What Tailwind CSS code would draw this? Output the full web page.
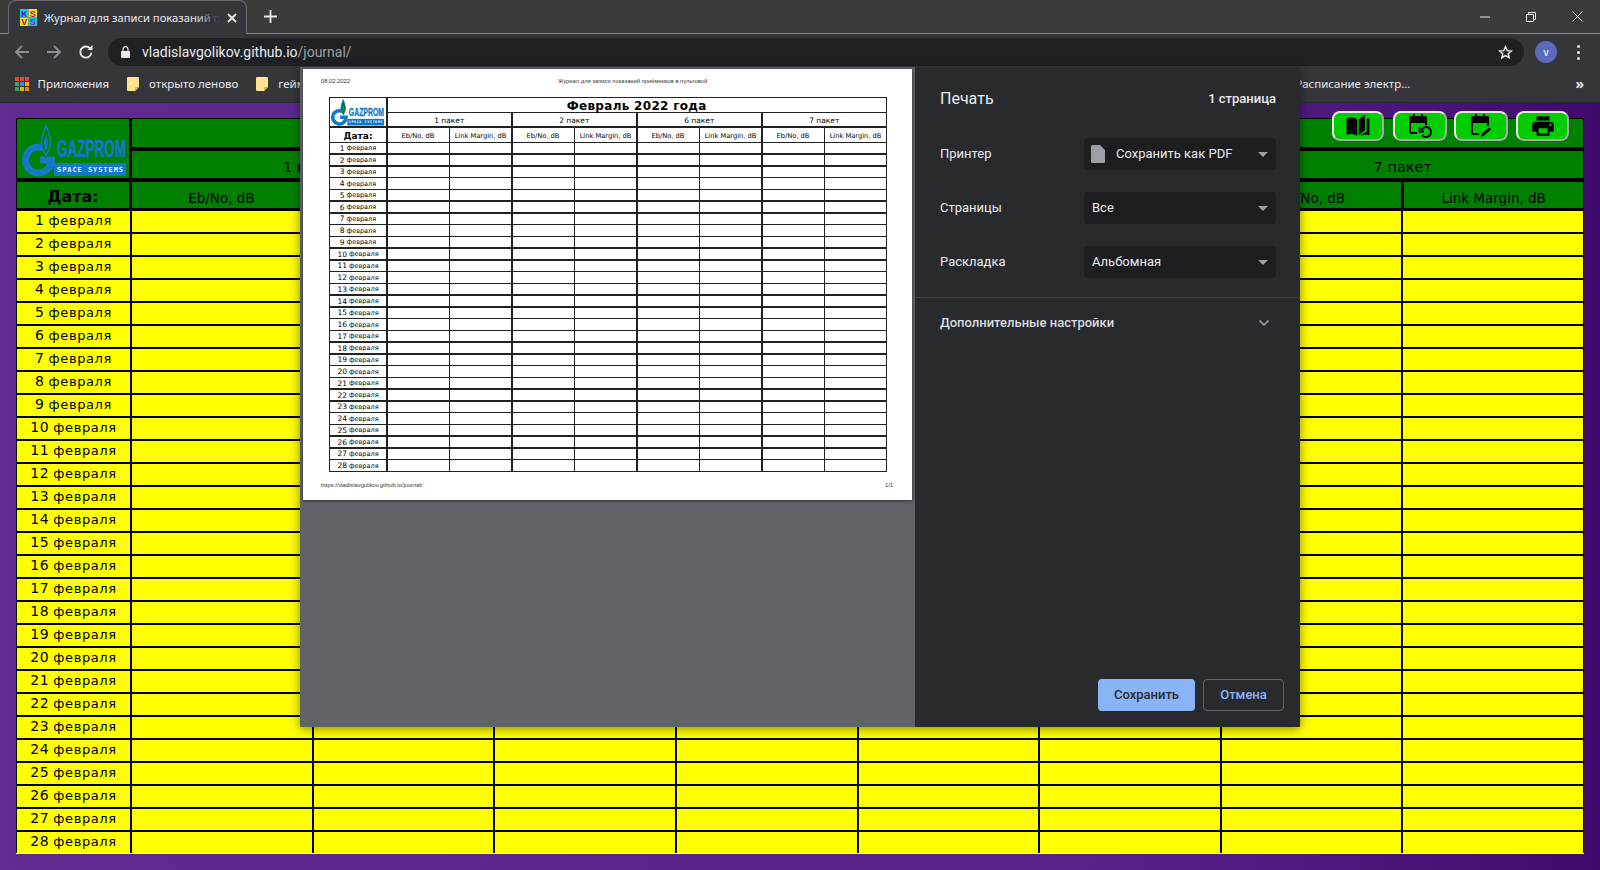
<!DOCTYPE html>
<html lang="ru">
<head>
  <meta charset="UTF-8">
  <title>Журнал для записи показаний приёмников в пультовой</title>
  <script src="https://cdn.jsdelivr.net/npm/@tailwindcss/browser@4"></script>
</head>
<body class="bg-[#35363a]">
<div class="relative w-[1600px] h-[870px] overflow-hidden flex flex-col font-['Noto_Sans',sans-serif]">

  <!-- tab strip -->
  <div class="h-[34px] bg-[#3b3b3b] flex items-end pl-[8px] relative border-b border-[#8a8a8a]">
    <div class="relative w-[239px] h-[34px] -mb-px bg-[#35363a] rounded-t-[8px] border-t border-x border-[#6a6a6a] flex items-center pl-[11px] text-[#e8eaed]">
      <svg class="w-[17px] h-[17px] shrink-0" viewBox="0 0 16 16">
        <rect width="8" height="8" fill="#18c8e8"/><rect x="8" width="8" height="8" fill="#ffe100"/>
        <rect y="8" width="8" height="8" fill="#ffe100"/><rect x="8" y="8" width="8" height="8" fill="#18c8e8"/>
        <text x="4" y="7.2" text-anchor="middle" font-size="8.5" font-weight="700" font-family="Liberation Sans" fill="#2b2bb8">K</text>
        <text x="12" y="7.2" text-anchor="middle" font-size="8.5" font-weight="700" font-family="Liberation Sans" fill="#7a1fa0">S</text>
        <text x="4" y="15.2" text-anchor="middle" font-size="8.5" font-weight="700" font-family="Liberation Sans" fill="#7a1fa0">V</text>
        <text x="12" y="15.2" text-anchor="middle" font-size="8.5" font-weight="700" font-family="Liberation Sans" fill="#7a1fa0">S</text>
      </svg>
      <div class="relative ml-[7px] w-[176px] h-[18px] leading-[18px] overflow-hidden whitespace-nowrap text-[11.2px]">
        Журнал для записи показаний приёмников
        <div class="absolute right-0 top-0 bottom-0 w-[24px] bg-linear-to-r from-transparent to-[#35363a]"></div>
      </div>
      <svg class="w-[10px] h-[10px] ml-[7px]" viewBox="0 0 10 10" stroke="#e8eaed" stroke-width="1.8"><path d="M1 1l8 8M9 1l-8 8"/></svg>
    </div>
    <svg class="w-[13px] h-[13px] ml-[17px] mb-[10px]" viewBox="0 0 13 13" stroke="#e8eaed" stroke-width="1.8"><path d="M6.5 0v13M0 6.5h13"/></svg>
    <div class="ml-auto h-full flex items-center text-[#e8eaed]">
      <svg class="w-[10px] h-[10px] mr-[36px]" viewBox="0 0 10 10" stroke="#e8eaed" stroke-width="1"><path d="M0 5h10"/></svg>
      <svg class="w-[10px] h-[10px] mr-[36px]" viewBox="0 0 10 10" stroke="#e8eaed" fill="none" stroke-width="1"><path d="M.5 2.5h7v7h-7zM2.5 2.5v-2h7v7h-2"/></svg>
      <svg class="w-[11px] h-[11px] mr-[17px]" viewBox="0 0 11 11" stroke="#e8eaed" stroke-width="1"><path d="M.5.5l10 10M10.500.5l-10 10"/></svg>
    </div>
  </div>

  <!-- address bar -->
  <div class="h-[36px] bg-[#35363a] flex items-center pl-[14px] pr-[16px]">
    <svg class="w-[16px] h-[16px]" viewBox="0 0 16 16" fill="none" stroke="#8c8e92" stroke-width="1.8"><path d="M15 8H2M8 2L2 8l6 6"/></svg>
    <svg class="w-[16px] h-[16px] ml-[16px]" viewBox="0 0 16 16" fill="none" stroke="#8c8e92" stroke-width="1.8"><path d="M1 8h13M8 2l6 6-6 6"/></svg>
    <svg class="w-[16px] h-[16px] ml-[16px]" viewBox="0 0 16 16" fill="none" stroke="#e8eaed" stroke-width="1.9"><path d="M13.500 8.500a5.600 5.600 0 1 1-1.600-4.400"/><path d="M14.500 1v5h-5z" fill="#e8eaed" stroke="none"/></svg>
    <div class="ml-[14px] h-[28px] w-[1416px] rounded-full bg-[#202124] flex items-center pl-[13px] pr-[11px]">
      <svg class="w-[9px] h-[12px]" viewBox="0 0 9 12" fill="#e8eaed"><path d="M1 5h7a1 1 0 0 1 1 1v5a1 1 0 0 1-1 1H1a1 1 0 0 1-1-1V6a1 1 0 0 1 1-1z"/><path d="M2 5V3.200a2.500 2.500 0 0 1 5 0V5" fill="none" stroke="#e8eaed" stroke-width="1.2"/></svg>
      <span class="ml-[12px] font-['Roboto',sans-serif] text-[14px] text-[#e8eaed]">vladislavgolikov.github.io<span class="text-[#9aa0a6]">/journal/</span></span>
      <svg class="ml-auto w-[15px] h-[15px]" viewBox="0 0 24 24" fill="none" stroke="#e8eaed" stroke-width="2.400"><path d="M12 3l2.800 6 6.500.7-4.900 4.300 1.400 6.400L12 17.100l-5.800 3.300 1.400-6.400L2.700 9.700 9.200 9z"/></svg>
    </div>
    <div class="ml-[11px] w-[22px] h-[22px] rounded-full bg-[#5c6bc0] text-white text-[10px] flex items-center justify-center">v</div>
    <div class="ml-[20px] flex flex-col gap-[3px]"><i class="block w-[3px] h-[3px] rounded-full bg-[#e8eaed]"></i><i class="block w-[3px] h-[3px] rounded-full bg-[#e8eaed]"></i><i class="block w-[3px] h-[3px] rounded-full bg-[#e8eaed]"></i></div>
  </div>

  <!-- bookmarks -->
  <div class="h-[33px] bg-[#35363a] border-b border-[#2a2a2c] flex items-center pl-[15px] pr-[16px] pb-[4px] text-[11.5px] text-[#e8eaed]">
    <div class="grid grid-cols-3 gap-[1.500px]">
      <i class="block w-[3.500px] h-[3.500px] bg-[#ea4335]"></i><i class="block w-[3.500px] h-[3.500px] bg-[#ea4335]"></i><i class="block w-[3.500px] h-[3.500px] bg-[#ea4335]"></i>
      <i class="block w-[3.500px] h-[3.500px] bg-[#34a853]"></i><i class="block w-[3.500px] h-[3.500px] bg-[#4285f4]"></i><i class="block w-[3.500px] h-[3.500px] bg-[#f9ab00]"></i>
      <i class="block w-[3.500px] h-[3.500px] bg-[#34a853]"></i><i class="block w-[3.500px] h-[3.500px] bg-[#f9ab00]"></i><i class="block w-[3.500px] h-[3.500px] bg-[#ea8600]"></i>
    </div>
    <span class="ml-[9px]">Приложения</span>
    <svg class="ml-[18px] w-[12px] h-[14px]" viewBox="0 0 12 14"><path d="M1 0h10a1 1 0 0 1 1 1v9l-4 4H1a1 1 0 0 1-1-1V1a1 1 0 0 1 1-1z" fill="#fde293"/><path d="M8 14v-4h4z" fill="#d9b64c"/></svg>
    <span class="ml-[10px]">открыто леново</span>
    <svg class="ml-[18px] w-[12px] h-[14px]" viewBox="0 0 12 14"><path d="M1 0h10a1 1 0 0 1 1 1v9l-4 4H1a1 1 0 0 1-1-1V1a1 1 0 0 1 1-1z" fill="#fde293"/><path d="M8 14v-4h4z" fill="#d9b64c"/></svg>
    <span class="ml-[10px]">геймеры</span>
    <span class="ml-auto mr-[165px]">Расписание электр...</span>
    <span class="text-[14px] leading-none font-bold">»</span>
  </div>

  <!-- page -->
  <div class="flex-1 relative bg-linear-to-r from-[#5f2b90] via-[#56228a] via-70% to-[#3f0a6e] pt-[15px] pl-[16px] font-['DejaVu_Sans',sans-serif] text-black">
    <div class="w-[1568px] bg-black pt-px px-px border-b border-white">
      <div class="grid grid-cols-[112px_repeat(8,1fr)] grid-rows-[28px_27px_26px] gap-x-[3px] gap-y-[4px]">
        <div class="row-span-2 bg-[#008000] flex items-center justify-center pl-[4px] pt-[4px]">
          <svg class="w-[106px] h-[53px]" viewBox="0 0 106 53"><use href="#gazprom"/></svg>
        </div>
        <div class="col-span-8 bg-[#008000] flex items-center justify-center text-[18px] font-bold">Февраль 2022 года</div>
        <div class="col-span-2 bg-[#008000] flex items-center justify-center pt-[7px] text-[14.500px]">1 пакет</div>
        <div class="col-span-2 bg-[#008000] flex items-center justify-center pt-[7px] text-[14.500px]">2 пакет</div>
        <div class="col-span-2 bg-[#008000] flex items-center justify-center pt-[7px] text-[14.500px]">6 пакет</div>
        <div class="col-span-2 bg-[#008000] flex items-center justify-center pt-[7px] text-[14.500px]">7 пакет</div>
        <div class="bg-[#008000] flex items-center justify-center pt-[4px] text-[16px] font-bold">Дата:</div>
        <div class="bg-[#008000] flex items-center justify-center pt-[6px] text-[13.500px]">Eb/No, dB</div>
        <div class="bg-[#008000] flex items-center justify-center pt-[6px] text-[13.500px]">Link Margin, dB</div>
        <div class="bg-[#008000] flex items-center justify-center pt-[6px] text-[13.500px]">Eb/No, dB</div>
        <div class="bg-[#008000] flex items-center justify-center pt-[6px] text-[13.500px]">Link Margin, dB</div>
        <div class="bg-[#008000] flex items-center justify-center pt-[6px] text-[13.500px]">Eb/No, dB</div>
        <div class="bg-[#008000] flex items-center justify-center pt-[6px] text-[13.500px]">Link Margin, dB</div>
        <div class="bg-[#008000] flex items-center justify-center pt-[6px] text-[13.500px]">Eb/No, dB</div>
        <div class="bg-[#008000] flex items-center justify-center pt-[6px] text-[13.500px]">Link Margin, dB</div>
      </div>
      <div id="bigDays" class="mt-[3px] grid grid-cols-[113px_repeat(8,1fr)] auto-rows-[21px] gap-[2px]"></div>
    </div>

    <!-- page action buttons -->
    <div class="absolute top-[8px] left-[1332px] flex">
      <button class="w-[52px] h-[30px] rounded-[8px] bg-[#00cc00] border-2 border-t-[#e8e8e8] border-l-[#e8e8e8] border-r-[#a8a8a8] border-b-[#a8a8a8] flex items-center justify-center">
        <svg class="w-[26px] h-[26px]" viewBox="0 0 24 24" fill="#000"><path d="M1.500 4.500C5 3.500 8.500 3.800 11.300 6v15C8.500 19.400 5 19 1.500 20z"/><path d="M12.700 6l5.800-4.500V16l-5.800 4.500z"/><path d="M20 5h2.500v15.500c-3-.7-6-.5-8.500.5 2-1.800 4-3 6-3.500z"/></svg>
      </button>
      <button class="ml-[9px] w-[54px] h-[30px] rounded-[8px] bg-[#00cc00] border-2 border-t-[#e8e8e8] border-l-[#e8e8e8] border-r-[#a8a8a8] border-b-[#a8a8a8] flex items-center justify-center">
        <svg class="w-[28px] h-[26px]" viewBox="0 0 28 26" fill="none" stroke="#000" stroke-width="2"><path d="M11 20H5a1 1 0 0 1-1-1V5a1 1 0 0 1 1-1h14a1 1 0 0 1 1 1v7"/><path d="M4 5h16v4H4z" fill="#000"/><path d="M8 1v4M16 1v4"/><path d="M15.500 17a5 5 0 1 1 .500 5"/><path d="M13.500 14v4.500h4.500" stroke-width="1.800"/></svg>
      </button>
      <button class="ml-[7px] w-[54px] h-[30px] rounded-[8px] bg-[#00cc00] border-2 border-t-[#e8e8e8] border-l-[#e8e8e8] border-r-[#a8a8a8] border-b-[#a8a8a8] flex items-center justify-center">
        <svg class="w-[28px] h-[26px]" viewBox="0 0 28 26" fill="none" stroke="#000" stroke-width="2"><path d="M12 21H6a1 1 0 0 1-1-1V5a1 1 0 0 1 1-1h14a1 1 0 0 1 1 1v8"/><path d="M5 5h16v4H5z" fill="#000"/><path d="M9 1v4M17 1v4"/><path d="M14 24l1-3.500 7-6 2 2-7 6z" fill="#000" stroke="none"/></svg>
      </button>
      <button class="ml-[8px] w-[53px] h-[30px] rounded-[8px] bg-[#00cc00] border-2 border-t-[#e8e8e8] border-l-[#e8e8e8] border-r-[#a8a8a8] border-b-[#a8a8a8] flex items-center justify-center">
        <svg class="w-[26px] h-[26px]" viewBox="0 0 24 24" fill="#000"><path d="M19 8H5c-1.660 0-3 1.340-3 3v6h4v4h12v-4h4v-6c0-1.660-1.340-3-3-3zm-3 11H8v-5h8v5zm3-7c-.550 0-1-.450-1-1s.450-1 1-1 1 .450 1 1-.450 1-1 1zm-1-9H6v4h12V3z"/></svg>
      </button>
    </div>
  </div>

  <!-- print dialog -->
  <div class="absolute left-[300px] top-[67px] w-[1000px] h-[660px] flex shadow-[0_2px_10px_rgba(0,0,0,0.45)]">
    <div class="w-[615px] bg-[#5f6368] pl-[3px] pt-[2px]">
      <div class="w-[609px] h-[431px] bg-white shadow-[0_1px_3px_rgba(0,0,0,0.5)] pt-[10px] pl-[18px] pr-[19px] font-['DejaVu_Sans',sans-serif] text-black">
        <div class="h-[6px] relative flex justify-between items-center font-['Liberation_Sans',sans-serif] text-[5.800px] leading-none text-[#333]">
          <span>08.02.2022</span>
          <span class="absolute left-[237px]">Журнал для записи показаний приёмников в пультовой</span>
        </div>
        <div class="mt-[12px] ml-[8px] w-[558px] bg-[#222] p-px">
          <div class="grid grid-cols-[56px_repeat(8,1fr)] grid-rows-[13.500px_13px_14px] gap-[1.500px] bg-[#222]">
            <div class="row-span-2 bg-white flex items-center justify-center">
              <svg class="w-[54px] h-[27px]" viewBox="0 0 106 53"><use href="#gazprom"/></svg>
            </div>
            <div class="col-span-8 bg-white flex items-center justify-center pt-[2px] text-[12px] leading-none font-bold tracking-[0.3px]">Февраль 2022 года</div>
            <div class="col-span-2 bg-white flex items-center justify-center pt-[2px] text-[7.500px] leading-none">1 пакет</div>
            <div class="col-span-2 bg-white flex items-center justify-center pt-[2px] text-[7.500px] leading-none">2 пакет</div>
            <div class="col-span-2 bg-white flex items-center justify-center pt-[2px] text-[7.500px] leading-none">6 пакет</div>
            <div class="col-span-2 bg-white flex items-center justify-center pt-[2px] text-[7.500px] leading-none">7 пакет</div>
            <div class="bg-white flex items-center justify-center pt-[3px] text-[9px] leading-none font-bold">Дата:</div>
            <div class="bg-white flex items-center justify-center pt-[3px] text-[6.700px] leading-none">Eb/No, dB</div>
            <div class="bg-white flex items-center justify-center pt-[3px] text-[6.700px] leading-none">Link Margin, dB</div>
            <div class="bg-white flex items-center justify-center pt-[3px] text-[6.700px] leading-none">Eb/No, dB</div>
            <div class="bg-white flex items-center justify-center pt-[3px] text-[6.700px] leading-none">Link Margin, dB</div>
            <div class="bg-white flex items-center justify-center pt-[3px] text-[6.700px] leading-none">Eb/No, dB</div>
            <div class="bg-white flex items-center justify-center pt-[3px] text-[6.700px] leading-none">Link Margin, dB</div>
            <div class="bg-white flex items-center justify-center pt-[3px] text-[6.700px] leading-none">Eb/No, dB</div>
            <div class="bg-white flex items-center justify-center pt-[3px] text-[6.700px] leading-none">Link Margin, dB</div>
          </div>
          <div id="miniDays" class="mt-[1.500px] grid grid-cols-[56px_repeat(8,1fr)] auto-rows-[10.250px] gap-[1.500px]"></div>
        </div>
        <div class="mt-[11px] h-[6px] flex justify-between items-center font-['Liberation_Sans',sans-serif] text-[5.800px] leading-none text-[#333]">
          <span>https://vladislavgolikov.github.io/journal/</span>
          <span>1/1</span>
        </div>
      </div>
    </div>

    <div class="w-[385px] bg-[#292a2d] flex flex-col font-['Roboto',sans-serif] text-[13px] text-[#e8eaed]">
      <div class="h-[64px] pl-[25px] pr-[24px] flex items-center justify-between">
        <span class="text-[16px]">Печать</span>
        <span class="font-medium">1 страница</span>
      </div>
      <div class="pl-[25px] pr-[24px] pt-[7px] flex flex-col gap-[22px] pb-[19px] border-b border-[#3f4043]">
        <div class="flex items-center justify-between">
          <span>Принтер</span>
          <div class="w-[192px] h-[32px] rounded-[4px] bg-[#1d1e20] flex items-center pl-[7px] pr-[8px]">
            <svg class="w-[14px] h-[18px]" viewBox="0 0 14 18" fill="#9aa0a6"><path d="M1.500 0H9l5 5v11.500a1.500 1.500 0 0 1-1.500 1.500h-11A1.500 1.500 0 0 1 0 16.500v-15A1.500 1.500 0 0 1 1.500 0z"/></svg>
            <span class="ml-[11px]">Сохранить как PDF</span>
            <svg class="ml-auto w-[10px] h-[5px]" viewBox="0 0 10 5" fill="#9aa0a6"><path d="M0 0h10L5 5z"/></svg>
          </div>
        </div>
        <div class="flex items-center justify-between">
          <span>Страницы</span>
          <div class="w-[192px] h-[32px] rounded-[4px] bg-[#1d1e20] flex items-center pl-[8px] pr-[8px]">
            <span>Все</span>
            <svg class="ml-auto w-[10px] h-[5px]" viewBox="0 0 10 5" fill="#9aa0a6"><path d="M0 0h10L5 5z"/></svg>
          </div>
        </div>
        <div class="flex items-center justify-between">
          <span>Раскладка</span>
          <div class="w-[192px] h-[32px] rounded-[4px] bg-[#1d1e20] flex items-center pl-[8px] pr-[8px]">
            <span>Альбомная</span>
            <svg class="ml-auto w-[10px] h-[5px]" viewBox="0 0 10 5" fill="#9aa0a6"><path d="M0 0h10L5 5z"/></svg>
          </div>
        </div>
      </div>
      <div class="h-[50px] pl-[25px] pr-[31px] flex items-center justify-between text-[#dadce0]">
        <span class="font-medium">Дополнительные настройки</span>
        <svg class="w-[10px] h-[6px]" viewBox="0 0 10 6" fill="none" stroke="#9aa0a6" stroke-width="1.600"><path d="M.5.500L5 5l4.500-4.500"/></svg>
      </div>
      <div class="mt-auto pb-[16px] pr-[16px] flex justify-end gap-[8px] font-medium">
        <button class="w-[97px] h-[32px] rounded-[4px] bg-[#8ab4f8] text-[#292a2d]">Сохранить</button>
        <button class="w-[81px] h-[32px] rounded-[4px] border border-[#5f6368] text-[#8ab4f8]">Отмена</button>
      </div>
    </div>
  </div>

  <svg class="hidden">
    <symbol id="gazprom" viewBox="0 0 106 53">
      <path d="M22.500 24.500A13 13 0 1 0 29.500 36H18" fill="none" stroke="#1478c8" stroke-width="7"/>
      <path d="M24 1c2.500 7 4.500 12 4.500 18 0 5-2 8.500-4.500 12-2.500-3.500-4.500-7-4.500-12 0-6 2-11 4.500-18z" fill="#008000" stroke="#1478c8" stroke-width="1.500"/>
      <path d="M24 11c1.500 4 2 6 2 9s-1 5-2 7c-1-2-2-4-2-7s.5-5 2-9z" fill="#1478c8"/>
      <text x="35" y="33" textLength="69" lengthAdjust="spacingAndGlyphs" font-family="Liberation Sans" font-weight="700" font-size="23" fill="#1478c8" stroke="#1478c8" stroke-width=".7">GAZPROM</text>
      <rect x="32" y="39" width="72" height="13" fill="#1478c8"/>
      <text x="35" y="48" textLength="66" font-family="DejaVu Sans Mono" font-weight="700" font-size="7" fill="#e6f0fa">SPACE SYSTEMS</text>
    </symbol>
  </svg>
</div>

<script>
  // fill the day rows of both tables, 28 rows and 8 empty columns
  function fillDays(id, dayClass, cellClass, numClass) {
    const target = document.getElementById(id);
    let html = '';
    for (let day = 1; day <= 28; day++) {
      html += '<div class="' + dayClass + '"><span class="' + numClass + '">' + day + '</span> февраля</div>';
      for (let col = 0; col < 8; col++) {
        html += '<div class="' + cellClass + '"></div>';
      }
    }
    target.innerHTML = html;
  }
  fillDays('bigDays', 'bg-[#ffff00] flex items-center justify-center gap-[4px] pb-[3px] text-[13px] tracking-[0.6px] leading-none', 'bg-[#ffff00]', 'text-[14px]');
  fillDays('miniDays', 'bg-white flex items-center justify-center gap-[2px] pt-px text-[6.500px] leading-none', 'bg-white', 'text-[7.500px]');
</script>
</body>
</html>
